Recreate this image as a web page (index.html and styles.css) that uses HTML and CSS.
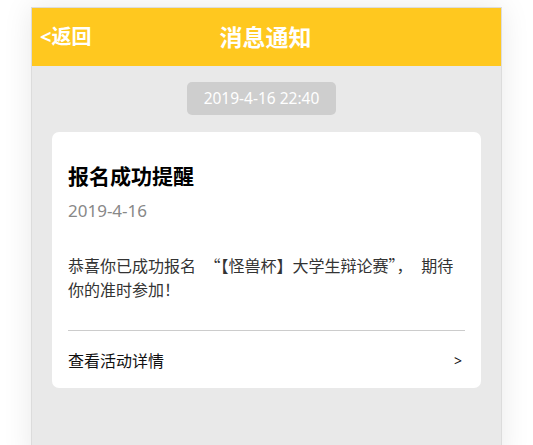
FILE: index.html
```html
<!DOCTYPE html>
<html lang="zh-CN">
<head>
<meta charset="utf-8">
<title>消息通知</title>
<link rel="stylesheet" href="styles.css">
</head>
<body>
<div class="phone">
  <header class="topbar">
    <a class="back">&lt;返回</a>
    <h1 class="title">消息通知</h1>
    <span class="spacer"></span>
  </header>
  <main class="content">
    <div class="time-row"><span class="time-badge">2019-4-16 22:40</span></div>
    <section class="card">
      <h2 class="card-title">报名成功提醒</h2>
      <div class="card-date">2019-4-16</div>
      <p class="card-text">恭喜你已成功报名 “【怪兽杯】大学生辩论赛”， 期待你的准时参加！</p>
      <div class="card-link">
        <span>查看活动详情</span>
        <span class="arrow">&gt;</span>
      </div>
    </section>
  </main>
</div>
</body>
</html>
```

FILE: styles.css
```css
* { box-sizing: border-box; }
html, body {
  margin: 0;
  padding: 0;
  background: #ffffff;
  height: 100%;
  overflow: hidden;
}
body {
  font-family: "Noto Sans", "Noto Sans CJK SC", sans-serif;
}
.phone {
  margin: 7px 0 0 31px;
  width: 471px;
  height: 460px;
  border: 1px solid #dcdcdc;
  border-bottom: none;
  background: #e9e9e9;
  box-shadow: 0 0 28px rgba(0, 0, 0, 0.09);
}
.topbar {
  height: 58px;
  background: #ffc81f;
  display: grid;
  grid-template-columns: 1fr auto 1fr;
  align-items: center;
  padding: 0 10px 0 8px;
  color: #ffffff;
}
.back {
  font-size: 20px;
  font-weight: 700;
  line-height: 1;
  justify-self: start;
}
.title {
  margin: 0;
  font-size: 23px;
  font-weight: 700;
  line-height: 1;
}
.content {
  padding: 16px 20px 0 20px;
}
.time-row {
  display: flex;
  justify-content: center;
  padding-right: 10px;
}
.time-badge {
  display: inline-block;
  height: 33px;
  line-height: 33px;
  padding: 0 17px;
  background: #cecece;
  color: #ffffff;
  font-size: 15.5px;
  border-radius: 5px;
}
.card {
  margin-top: 17px;
  background: #ffffff;
  border-radius: 7px;
  padding: 30px 16px 15px 16px;
}
.card-title {
  margin: 0;
  font-size: 21px;
  line-height: 28px;
  font-weight: 700;
  color: #000000;
}
.card-date {
  margin-top: 9px;
  font-size: 17px;
  line-height: 24px;
  color: #888888;
}
.card-text {
  margin: 30px 0 0 0;
  font-family: "Noto Sans CJK SC", sans-serif;
  font-size: 16px;
  line-height: 24px;
  color: #333333;
  word-spacing: 5px;
  padding-bottom: 29px;
  border-bottom: 1px solid #cccccc;
}
.card-link {
  padding-top: 18px;
  display: flex;
  justify-content: space-between;
  align-items: center;
  font-size: 16px;
  line-height: 24px;
  color: #111111;
}
.arrow {
  font-size: 14px;
  padding-right: 3px;
}
```
